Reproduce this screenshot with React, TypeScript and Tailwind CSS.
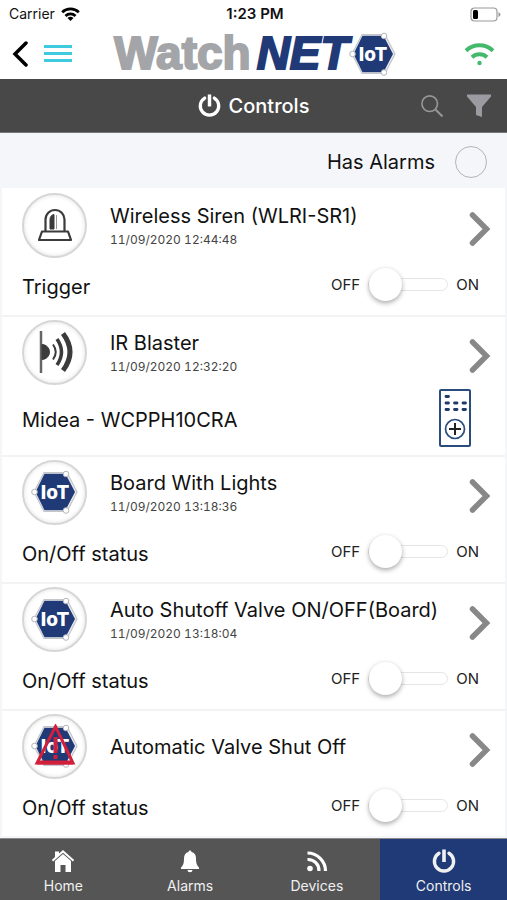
import type { ReactNode } from "react";

function IotBadge({ alert = false }: { alert?: boolean }) {
  return (
    <svg viewBox="0 0 48 44" className="h-11 w-12 shrink-0" role="img" aria-label="IoT">
      <path d="M3 22 13 2.500h23L46 22 36 41.500H13z" fill="#ececee" stroke="#c4c6ca" strokeWidth="1.200" />
      <path d="M4.500 22 13.500 3.800h21L44 22l-9.500 18.200h-21z" fill="#1f3a76" />
      <text x="24" y="29" textAnchor="middle" fill="#fff" fontSize="19" fontFamily="Inter, sans-serif" fontWeight="800">
        IoT
      </text>
      <g fill="#fff" stroke="#b4b6bc">
        <circle cx="35" cy="4" r="2.800" />
        <circle cx="35" cy="40.500" r="2.800" />
        <circle cx="3.500" cy="22" r="2.800" />
      </g>
      {alert && (
        <g fill="none" stroke="#d21f3c">
          <path d="M24.500 2.500 42 39H6z" strokeWidth="3" />
          <path d="M6 38.500h36" strokeWidth="4" />
          <path d="M24.500 13v16M24.500 31v4" strokeWidth="4" />
        </g>
      )}
    </svg>
  );
}

function SirenIcon() {
  return (
    <svg viewBox="0 0 34 34" className="size-[34px]" fill="none" stroke="#3b3b3b" strokeWidth="2.200" strokeLinejoin="round" aria-hidden="true">
      <path d="M7.500 23V11.500a9.500 9.500 0 0 1 19 0V23" />
      <path d="M4 23.500h26l3 8.500H1z" />
      <path d="M16 6.500c-2.500.5-4 2.200-4 5V21h4z" fill="#3b3b3b" strokeWidth="1" />
      <path d="M18.500 7v14" stroke="#999" strokeWidth="1" />
    </svg>
  );
}

function IrIcon() {
  return (
    <svg viewBox="0 0 36 44" className="h-11 w-9" fill="none" stroke="#3b3b3b" aria-hidden="true">
      <path d="M4 1v42" stroke="#666" strokeWidth="2.500" />
      <path d="M5 14.500a7.500 7.500 0 0 1 0 15z" fill="#3b3b3b" />
      <path d="M16 14.500q5.500 7.500 0 15" strokeWidth="2" />
      <path d="M20 9q9 13 0 26" strokeWidth="3.500" />
      <path d="M26 3.500q14 18.500 0 37" strokeWidth="5" />
    </svg>
  );
}

function RemoteIcon() {
  return (
    <svg viewBox="0 0 32 58" className="h-[58px] w-8" fill="none" stroke="#284c7c" aria-hidden="true">
      <rect x="1" y="1" width="30" height="56" rx="1" strokeWidth="2" />
      <path d="M7 7.500h2.500M7 14h2.500M15.500 14H18M24 14h2.500M7 20.500h2.500M15.500 20.500H18M24 20.500h2.500" strokeWidth="2.800" strokeLinecap="round" stroke="#1f3a66" />
      <circle cx="16" cy="40" r="9.500" strokeWidth="1.700" />
      <path d="M10 40h12M16 34v12" stroke="#222" strokeWidth="2" />
    </svg>
  );
}

function PowerIcon({ className }: { className: string }) {
  return (
    <svg viewBox="0 0 24 24" className={className} fill="none" stroke="currentColor" strokeWidth="3.400" aria-hidden="true">
      <path d="M7 4.200a9.600 9.600 0 1 0 10 0" strokeLinecap="round" />
      <path d="M12 .5V13" strokeWidth="3.600" />
    </svg>
  );
}

function WifiIcon({ className }: { className: string }) {
  return (
    <svg viewBox="0 0 30 24" className={className} fill="none" stroke="currentColor" strokeWidth="4" aria-hidden="true">
      <path d="M1.500 8.700a19.500 19.500 0 0 1 27 0" />
      <path d="M7.500 15.200a11 11 0 0 1 15 0" />
      <circle cx="15" cy="21" r="2.200" fill="currentColor" stroke="none" />
    </svg>
  );
}

function SignalIcon() {
  return (
    <svg viewBox="0 0 19 14" className="h-[14px] w-[19px]" fill="none" stroke="#000" strokeWidth="2.800" aria-hidden="true">
      <path d="M1.200 5.200a12 12 0 0 1 16.600 0" />
      <path d="M4.500 8.900a7.200 7.200 0 0 1 10 0" />
      <path d="M6.500 11a4.500 4.500 0 0 1 6 0l-3 3z" fill="#000" stroke="none" />
    </svg>
  );
}

function Chevron() {
  return (
    <svg viewBox="0 0 22 34" className="h-[34px] w-[22px]" fill="none" stroke="#888" strokeWidth="5.500" aria-hidden="true">
      <path d="M3.500 3l14 14-14 14" strokeLinecap="round" />
    </svg>
  );
}

function Toggle({ label }: { label: string }) {
  return (
    <label className="flex items-center pb-1 text-[15px] leading-5 text-[#222]">
      <span>OFF</span>
      <input
        type="checkbox"
        role="switch"
        aria-label={label}
        className="mx-2 flex h-[13px] w-20 cursor-pointer appearance-none items-center rounded-full border border-[#e5e5e5] bg-white before:block before:size-[33px] before:shrink-0 before:rounded-full before:bg-white before:shadow-[0_2px_5px_rgba(0,0,0,0.35)] before:content-[''] checked:justify-end"
      />
      <span>ON</span>
    </label>
  );
}

type Device = {
  name: string;
  time?: string;
  status: string;
  icon: ReactNode;
  remote?: boolean;
};

const devices: Device[] = [
  { name: "Wireless Siren (WLRI-SR1)", time: "11/09/2020 12:44:48", status: "Trigger", icon: <SirenIcon /> },
  { name: "IR Blaster", time: "11/09/2020 12:32:20", status: "Midea - WCPPH10CRA", icon: <IrIcon />, remote: true },
  { name: "Board With Lights", time: "11/09/2020 13:18:36", status: "On/Off status", icon: <IotBadge /> },
  { name: "Auto Shutoff Valve ON/OFF(Board)", time: "11/09/2020 13:18:04", status: "On/Off status", icon: <IotBadge /> },
  { name: "Automatic Valve Shut Off", status: "On/Off status", icon: <IotBadge alert /> },
];

function DeviceRow({ device }: { device: Device }) {
  return (
    <li className="border-t-2 border-[#f3f3f4] bg-white pt-[2px] pl-5 first:border-white">
      <div className="flex h-[66px] items-center pr-[14px]">
        <div className="flex size-[65px] shrink-0 items-center justify-center rounded-full border-2 border-[#d6d6d6] shadow-[inset_0_0_4px_rgba(0,0,0,0.12)]">
          {device.icon}
        </div>
        <div className="ml-[23px] min-w-0 flex-1 pt-[2px]">
          <h2 className="text-xl leading-6">{device.name}</h2>
          {device.time && (
            <time className="mt-1 block text-xs leading-4 text-[#444] tabular-nums">{device.time}</time>
          )}
        </div>
        <button type="button" aria-label={`Open ${device.name}`} className="mt-2">
          <Chevron />
        </button>
      </div>
      <div className={device.remote ? "flex h-[70px] items-center justify-between pr-[34px]" : "flex h-[57px] items-center justify-between pr-[26px]"}>
        <span className="text-xl leading-6">{device.status}</span>
        {device.remote ? (
          <button type="button" aria-label="Open remote" className="pb-1">
            <RemoteIcon />
          </button>
        ) : (
          <Toggle label={`${device.name} ${device.status}`} />
        )}
      </div>
    </li>
  );
}

const tabs = [
  {
    label: "Home",
    icon: (
      <svg viewBox="0 0 24 24" className="size-6" fill="#fff" aria-hidden="true">
        <path d="M12 1 8 4.600V2.500H4v5.600L.8 11l1.300 1.500L12 3.800l9.900 8.700 1.300-1.500z" />
        <path d="M12 5 4 12v11h5.500v-7h5v7H20V12z" />
      </svg>
    ),
  },
  {
    label: "Alarms",
    icon: (
      <svg viewBox="0 0 24 24" className="size-6" fill="#fff" aria-hidden="true">
        <path d="M12 1.500c-.9 0-1.500.6-1.500 1.500C7.500 3.700 6 6 6 9.500c0 5-1 7-3 9V20h18v-1.500c-2-2-3-4-3-9 0-3.500-1.500-5.800-4.500-6.500 0-.9-.6-1.500-1.500-1.500zM9.500 21a2.500 2.200 0 0 0 5 0z" />
      </svg>
    ),
  },
  {
    label: "Devices",
    icon: (
      <svg viewBox="0 0 24 24" className="size-6" fill="none" stroke="#fff" strokeWidth="3.200" aria-hidden="true">
        <circle cx="5" cy="19.500" r="2.800" fill="#fff" stroke="none" />
        <path d="M2.500 10.500A11 11 0 0 1 14 22M2.500 4A18 18 0 0 1 20.500 22" />
      </svg>
    ),
  },
  { label: "Controls", icon: <PowerIcon className="size-6" /> },
];

export default function App() {
  return (
    <div className="flex min-h-screen flex-col bg-[#f4f6fa] font-[Inter,sans-serif] text-[#111]">
      <div className="grid h-7 grid-cols-3 items-center bg-white pr-[6px] pl-[9px] text-sm">
        <div className="flex items-center gap-[6px]">
          Carrier
          <SignalIcon />
        </div>
        <div className="text-center text-[15px] font-semibold">1:23 PM</div>
        <svg viewBox="0 0 31 15" className="h-[15px] w-[31px] justify-self-end" role="img" aria-label="Battery low">
          <rect x="1" y="1" width="26" height="13" rx="3.500" fill="#fff" stroke="#999" strokeWidth="1.200" />
          <rect x="3" y="3" width="5" height="9" rx="1.500" fill="#000" />
          <path d="M28.500 5v5q2-1 2-2.500T28.500 5z" fill="#999" />
        </svg>
      </div>

      <header className="grid h-[51px] grid-cols-[1fr_auto_1fr] items-center bg-white px-3">
        <div className="flex items-center gap-4">
          <button type="button" aria-label="Back">
            <svg viewBox="0 0 16 26" className="h-[26px] w-4" fill="none" stroke="#000" strokeWidth="3.500" strokeLinecap="round" aria-hidden="true">
              <path d="M14 2 3 13l11 11" />
            </svg>
          </button>
          <button type="button" aria-label="Menu" className="flex w-7 flex-col gap-1">
            <span className="h-[3px] bg-[#3fcbdf]" />
            <span className="h-[3px] bg-[#3fcbdf]" />
            <span className="h-[3px] bg-[#3fcbdf]" />
          </button>
        </div>
        <div className="flex items-center pl-1 font-['Liberation_Sans',sans-serif] text-[46px] leading-[51px] font-bold">
          <span className="text-[#a3a5a8] [-webkit-text-stroke:2px_#a3a5a8]">Watch</span>
          <span className="ml-[6px] text-[#1f3a76] italic [-webkit-text-stroke:2px_#1f3a76]">NET</span>
          <IotBadge />
        </div>
        <button type="button" aria-label="Connection" className="justify-self-end text-[#44b86b]">
          <WifiIcon className="h-6 w-[31px]" />
        </button>
      </header>

      <div className="grid h-[54px] grid-cols-[1fr_auto_1fr] items-center border-b border-[#777] bg-[#484848] px-4 text-white">
        <h1 className="col-start-2 flex items-center gap-2 text-xl font-medium">
          <PowerIcon className="size-[23px]" />
          Controls
        </h1>
        <div className="flex items-center gap-6 justify-self-end">
          <button type="button" aria-label="Search">
            <svg viewBox="0 0 24 24" className="size-[22px]" fill="none" stroke="#96969b" strokeWidth="1.800" aria-hidden="true">
              <circle cx="9.500" cy="9.500" r="8.500" />
              <path d="m15.500 15.500 8 8" strokeWidth="2.200" />
            </svg>
          </button>
          <button type="button" aria-label="Filter">
            <svg viewBox="0 0 24 24" className="size-6" fill="#9b9ba1" aria-hidden="true">
              <path d="M0 .5h24v2L15 13v10l-6-2v-8L0 2.500z" />
            </svg>
          </button>
        </div>
      </div>

      <label className="flex h-[55px] items-center justify-end gap-5 pt-[2px] pr-5 text-xl">
        Has Alarms
        <input type="checkbox" className="size-8 appearance-none rounded-full border border-[#b5b5b8] checked:bg-[#1f3a76]" />
      </label>

      <ul className="flex-1 px-[2px]">
        {devices.map((device) => (
          <DeviceRow key={device.name} device={device} />
        ))}
      </ul>

      <nav className="sticky bottom-0 grid h-[62px] grid-cols-4 border-t border-[#888] bg-[#555] text-sm text-[#f0f0f0]">
        {tabs.map((tab) => (
          <a
            key={tab.label}
            href={`#${tab.label.toLowerCase()}`}
            aria-current={tab.label === "Controls" ? "page" : undefined}
            className="flex flex-col items-center justify-center gap-[3px] pt-[5px] leading-5 aria-[current=page]:bg-[#1f3a76]"
          >
            {tab.icon}
            {tab.label}
          </a>
        ))}
      </nav>
    </div>
  );
}
